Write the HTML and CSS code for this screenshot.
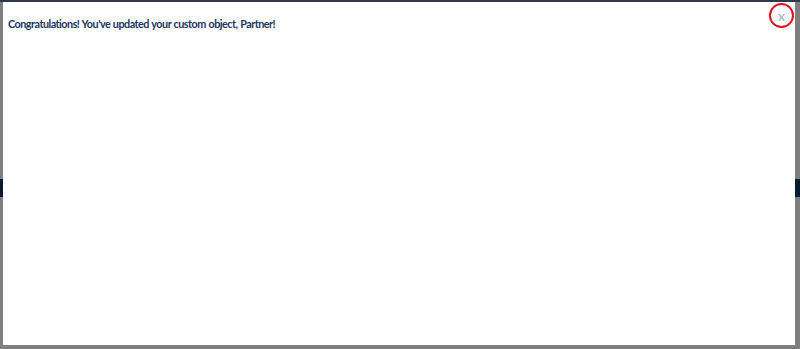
FILE: index.html
```html
<!DOCTYPE html>
<html>
<head>
<meta charset="utf-8">
<link rel="stylesheet" href="styles.css">
</head>
<body>
<div class="backdrop">
  <div class="topline"></div>
  <div class="spacer"></div>
  <div class="band"></div>
  <div class="rest"></div>
</div>
<div class="modal">
  <h2 class="title">Congratulations! You've updated your custom object, Partner!</h2>
  <button class="close" aria-label="Close">x</button>
</div>
</body>
</html>
```

FILE: styles.css
```css
html, body {
  margin: 0;
  padding: 0;
  width: 800px;
  height: 349px;
  overflow: hidden;
  background: #7f7f7f;
  font-family: Lato, "Liberation Sans", sans-serif;
}
.backdrop {
  display: flex;
  flex-direction: column;
  height: 349px;
}
.topline {
  height: 2px;
  background: #2e3a4c;
}
.spacer {
  height: 177px;
}
.band {
  height: 18px;
  background: #0b1a33;
}
.rest {
  flex: 1;
}
.modal {
  position: fixed;
  left: 3px;
  top: 2px;
  width: 792px;
  height: 343px;
  background: #ffffff;
  box-sizing: border-box;
}
.title {
  margin: 0;
  padding: 14px 0 0 5px;
  font-size: 10.8px;
  font-weight: 700;
  letter-spacing: -0.5px;
  word-spacing: 0.5px;
  color: #1b365f;
  line-height: 15px;
}
.close {
  position: absolute;
  top: 1px;
  right: 1px;
  width: 25px;
  height: 25px;
  box-sizing: border-box;
  border: 2px solid #e0101e;
  border-radius: 50%;
  background: transparent;
  color: #a9a9a9;
  font-family: Lato, "Liberation Sans", sans-serif;
  font-size: 14px;
  line-height: 19px;
  padding: 0;
  text-align: center;
}
```
